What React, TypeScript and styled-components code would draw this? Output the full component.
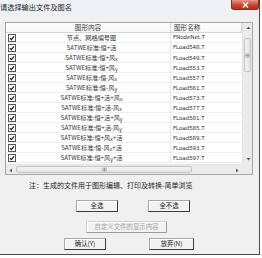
import React from 'react';
import styled, { createGlobalStyle } from 'styled-components';

const GlobalStyle = createGlobalStyle`
  html, body {
    margin: 0;
    padding: 0;
    background: #ffffff;
  }
  body {
    font-family: "Noto Sans CJK SC", "Liberation Sans", sans-serif;
    color: #222;
  }
`;

const Window = styled.div`
  width: 260px;
  height: 255px;
  box-sizing: border-box;
  background: #f0f0f0;
  border-right: 1px solid #4b4b4b;
  border-bottom: 1px solid #4b4b4b;
  display: flex;
  flex-direction: column;
  overflow: hidden;
`;

const TitleBar = styled.div`
  height: 14px;
  flex: none;
  display: flex;
  justify-content: space-between;
  align-items: flex-start;
  background: #eef1f5;
`;

const Title = styled.span`
  margin: 3px 0 0 0;
  font-size: 7.2px;
  line-height: 8px;
  color: #1a1a1a;
  white-space: nowrap;
`;

const CloseButton = styled.div`
  width: 28px;
  height: 10px;
  box-sizing: border-box;
  border: 1px solid #8c2a1c;
  border-top: none;
  border-radius: 0 0 3px 3px;
  background: linear-gradient(#e6978a, #c9452f 55%, #b8321d);
  display: flex;
  align-items: center;
  justify-content: center;
`;

const Body = styled.div`
  flex: 1;
  display: flex;
  flex-direction: column;
  padding: 8px 0 0 5px;
`;

const ListView = styled.div`
  width: 248px;
  height: 153px;
  box-sizing: border-box;
  border: 1px solid #a3a7ad;
  background: #fff;
  display: grid;
  grid-template-columns: 236px 10px;
  grid-template-rows: 141px 10px;
`;

const ListContent = styled.div`
  overflow: hidden;
  display: flex;
  flex-direction: column;
`;

const HeaderRow = styled.div`
  height: 10px;
  flex: none;
  box-sizing: border-box;
  border-bottom: 1px solid #d5d5d5;
  display: grid;
  grid-template-columns: 165px 1fr;
  background: linear-gradient(#ffffff, #f7f8fa);
`;

const HeaderCell = styled.div<{ $align?: 'center' | 'left' }>`
  font-size: 6.6px;
  line-height: 9px;
  color: #333;
  text-align: ${(p) => p.$align ?? 'left'};
  padding-left: ${(p) => (p.$align === 'center' ? 0 : 3)}px;
  border-right: 1px solid #d5d5d5;
  white-space: nowrap;
`;

const Row = styled.div`
  height: 10px;
  flex: none;
  box-sizing: border-box;
  border-bottom: 1px solid #efefef;
  display: grid;
  grid-template-columns: 13px 152px 1fr;
  align-items: center;
`;

const CheckCell = styled.div`
  padding-left: 2px;
  display: flex;
  align-items: center;
  height: 9px;
`;

const ContentCell = styled.div`
  font-size: 6.2px;
  line-height: 9px;
  text-align: center;
  padding-right: 6px;
  white-space: nowrap;
  border-right: 1px solid #e6e6e6;
  color: #333;
`;

const NameCell = styled.div`
  font-family: "DejaVu Sans", "Liberation Sans", sans-serif;
  font-size: 5.6px;
  line-height: 9px;
  padding-left: 2px;
  white-space: nowrap;
  color: #333;
  letter-spacing: -0.1px;
`;

const Sub = styled.span`
  font-size: 5.2px;
  vertical-align: -1px;
`;

const VScroll = styled.div`
  background: #ebebeb;
  border-left: 1px solid #e2e2e2;
  display: flex;
  flex-direction: column;
`;

const HScroll = styled.div`
  background: #ebebeb;
  border-top: 1px solid #e2e2e2;
  display: flex;
`;

const Corner = styled.div`
  background: #ebebeb;
`;

const ArrowBox = styled.div`
  width: 10px;
  height: 10px;
  flex: none;
  display: flex;
  align-items: center;
  justify-content: center;
`;

const VThumb = styled.div`
  margin: 5px 1px 0 1px;
  height: 34px;
  box-sizing: border-box;
  border: 1px solid #c2c2c2;
  border-radius: 2px;
  background: linear-gradient(90deg, #f4f4f4, #e3e3e3);
  display: flex;
  align-items: center;
  justify-content: center;
`;

const HThumb = styled.div`
  margin: 1px 0;
  width: 176px;
  box-sizing: border-box;
  border: 1px solid #c2c2c2;
  border-radius: 2px;
  background: linear-gradient(#f4f4f4, #e3e3e3);
  display: flex;
  align-items: center;
  justify-content: center;
`;

const Spacer = styled.div`
  flex: 1;
`;

const Note = styled.div`
  margin-top: 6px;
  padding-left: 24px;
  font-size: 7px;
  line-height: 9px;
  color: #222;
  white-space: nowrap;
`;

const ButtonRow = styled.div<{ $top: number; $left: number; $gap?: number }>`
  display: flex;
  margin-top: ${(p) => p.$top}px;
  padding-left: ${(p) => p.$left}px;
  gap: ${(p) => p.$gap ?? 0}px;
`;

const DialogButton = styled.div<{ $width: number; $disabled?: boolean }>`
  width: ${(p) => p.$width}px;
  height: 12px;
  box-sizing: border-box;
  border: 1px solid ${(p) => (p.$disabled ? '#cfcfcf' : '#a8a8a8')};
  border-right-color: ${(p) => (p.$disabled ? '#9a9a9a' : '#3c3c3c')};
  border-bottom-color: ${(p) => (p.$disabled ? '#9a9a9a' : '#3c3c3c')};
  box-shadow: inset 1px 1px #ffffff;
  background: #f2f2f2;
  font-size: 6.4px;
  line-height: 10px;
  text-align: center;
  color: ${(p) => (p.$disabled ? '#a3a3a3' : '#222')};
  white-space: nowrap;
`;

const CheckBox = () => (
  <svg width="8" height="8" viewBox="0 0 8 8">
    <rect x="0.5" y="0.5" width="7" height="7" fill="#fff" stroke="#555" />
    <path d="M2 4.2 L3.3 5.6 L6 2.3" fill="none" stroke="#111" strokeWidth="1.2" />
  </svg>
);

const Arrow = ({ dir }: { dir: 'up' | 'down' | 'left' | 'right' }) => {
  const pts = {
    up: '1.5,4 3.5,1.5 5.5,4',
    down: '1.5,2 3.5,4.5 5.5,2',
    left: '4,1.5 1.5,3.5 4,5.5',
    right: '2,1.5 4.5,3.5 2,5.5',
  }[dir];
  return (
    <svg width="7" height="7" viewBox="0 0 7 7">
      <polygon points={pts} fill="#5a5a5a" />
    </svg>
  );
};

const Grip = ({ vertical }: { vertical?: boolean }) => (
  <svg width="5" height="5" viewBox="0 0 5 5">
    {vertical ? (
      <>
        <line x1="0.5" y1="1" x2="4.5" y2="1" stroke="#9a9a9a" />
        <line x1="0.5" y1="2.5" x2="4.5" y2="2.5" stroke="#9a9a9a" />
        <line x1="0.5" y1="4" x2="4.5" y2="4" stroke="#9a9a9a" />
      </>
    ) : (
      <>
        <line x1="1" y1="0.5" x2="1" y2="4.5" stroke="#9a9a9a" />
        <line x1="2.5" y1="0.5" x2="2.5" y2="4.5" stroke="#9a9a9a" />
        <line x1="4" y1="0.5" x2="4" y2="4.5" stroke="#9a9a9a" />
      </>
    )}
  </svg>
);

type Item = { label: React.ReactNode; file: string };

const load = (parts: React.ReactNode) => <>SATWE标准:{parts}</>;

const items: Item[] = [
  { label: '节点、网格编号图', file: 'FNodeNet.T' },
  { label: load('恒+活'), file: 'FLoad548.T' },
  { label: load(<>恒+风<Sub>x</Sub></>), file: 'FLoad549.T' },
  { label: load(<>恒+风<Sub>y</Sub></>), file: 'FLoad553.T' },
  { label: load(<>恒-风<Sub>x</Sub></>), file: 'FLoad557.T' },
  { label: load(<>恒-风<Sub>y</Sub></>), file: 'FLoad561.T' },
  { label: load(<>恒+活+风<Sub>x</Sub></>), file: 'FLoad573.T' },
  { label: load(<>恒+活-风<Sub>x</Sub></>), file: 'FLoad577.T' },
  { label: load(<>恒+活+风<Sub>y</Sub></>), file: 'FLoad581.T' },
  { label: load(<>恒+活-风<Sub>y</Sub></>), file: 'FLoad585.T' },
  { label: load(<>恒+风<Sub>x</Sub>+活</>), file: 'FLoad589.T' },
  { label: load(<>恒-风<Sub>x</Sub>+活</>), file: 'FLoad593.T' },
  { label: load(<>恒+风<Sub>y</Sub>+活</>), file: 'FLoad597.T' },
];

export default function App() {
  return (
    <>
      <GlobalStyle />
      <Window>
        <TitleBar>
          <Title>请选择输出文件及图名</Title>
          <CloseButton>
            <svg width="7" height="6" viewBox="0 0 7 6">
              <path d="M1 0.5 L6 5.5 M6 0.5 L1 5.5" stroke="#fff" strokeWidth="1.4" />
            </svg>
          </CloseButton>
        </TitleBar>
        <Body>
          <ListView>
            <ListContent>
              <HeaderRow>
                <HeaderCell $align="center">图形内容</HeaderCell>
                <HeaderCell>图形名称</HeaderCell>
              </HeaderRow>
              {items.map((item) => (
                <Row key={item.file}>
                  <CheckCell>
                    <CheckBox />
                  </CheckCell>
                  <ContentCell>{item.label}</ContentCell>
                  <NameCell>{item.file}</NameCell>
                </Row>
              ))}
            </ListContent>
            <VScroll>
              <ArrowBox>
                <Arrow dir="up" />
              </ArrowBox>
              <VThumb>
                <Grip vertical />
              </VThumb>
              <Spacer />
              <ArrowBox>
                <Arrow dir="down" />
              </ArrowBox>
            </VScroll>
            <HScroll>
              <ArrowBox>
                <Arrow dir="left" />
              </ArrowBox>
              <HThumb>
                <Grip />
              </HThumb>
              <Spacer />
              <ArrowBox>
                <Arrow dir="right" />
              </ArrowBox>
            </HScroll>
            <Corner />
          </ListView>
          <Note>注：生成的文件用于图形编辑、打印及转换-简单浏览</Note>
          <ButtonRow $top={10} $left={71} $gap={30}>
            <DialogButton $width={42}>全选</DialogButton>
            <DialogButton $width={42}>全不选</DialogButton>
          </ButtonRow>
          <ButtonRow $top={9} $left={81}>
            <DialogButton $width={81} $disabled>自定义文件的显示内容</DialogButton>
          </ButtonRow>
          <ButtonRow $top={5} $left={59} $gap={43}>
            <DialogButton $width={42}>确认(Y)</DialogButton>
            <DialogButton $width={45}>放弃(N)</DialogButton>
          </ButtonRow>
        </Body>
      </Window>
    </>
  );
}
